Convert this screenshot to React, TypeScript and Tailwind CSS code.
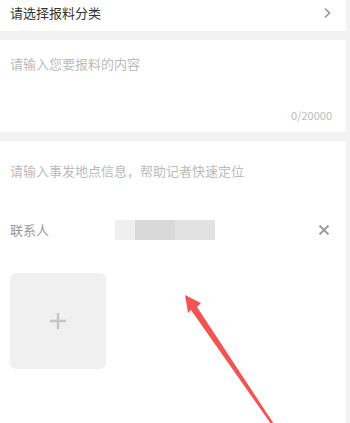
import React from "react";

const font = { fontFamily: '"Noto Sans CJK SC", "Noto Sans", sans-serif' };

export default function App() {
  return (
    <div
      className="relative h-[423px] w-[350px] overflow-hidden bg-[#f2f2f2]"
      style={font}
    >
      <div className="w-[346px]">
        {/* category row */}
        <div className="flex h-[31px] items-start justify-between bg-white pl-[10px] pr-[15px] pt-[4px]">
          <span className="text-[13px] leading-[18px] text-[#333]">请选择报料分类</span>
          <svg width="8" height="12" viewBox="0 0 8 12" className="mt-[3px]">
            <path d="M2 1.5 L6.5 6 L2 10.5" fill="none" stroke="#999" strokeWidth="1.6" />
          </svg>
        </div>

        {/* content textarea */}
        <div className="mt-[9px] flex h-[92px] flex-col justify-between bg-white px-[10px] pb-[10px] pt-[15px]">
          <span className="text-[13px] leading-[18px] text-[#bbb]">请输入您要报料的内容</span>
          <span className="self-end pr-[4px] text-[11px] leading-[14px] text-[#bbb]">0/20000</span>
        </div>

        {/* location / contact / upload */}
        <div className="mt-[9px] h-[300px] bg-white px-[10px] pt-[21px]">
          <div className="text-[13px] leading-[18px] text-[#bbb]">请输入事发地点信息，帮助记者快速定位</div>
          <div className="mt-[40px] flex h-[20px] items-center">
            <span className="w-[105px] text-[13px] leading-[18px] text-[#999]">联系人</span>
            <div className="flex h-[20px]">
              <div className="w-[20px] bg-[#efefef]" />
              <div className="w-[40px] bg-[#d9d9d9]" />
              <div className="w-[40px] bg-[#e2e2e2]" />
            </div>
            <svg width="12" height="12" viewBox="0 0 12 12" className="ml-auto mr-[6px]">
              <path d="M1.5 1.5 L10.5 10.5 M10.5 1.5 L1.5 10.5" stroke="#9a9a9a" strokeWidth="1.8" />
            </svg>
          </div>
          <div className="mt-[33px] flex h-[96px] w-[96px] items-center justify-center rounded-md bg-[#f0f0f0]">
            <svg width="18" height="18" viewBox="0 0 18 18">
              <path d="M9 1 V17 M1 9 H17" stroke="#c4c4c4" strokeWidth="2.4" />
            </svg>
          </div>
        </div>
      </div>

      {/* annotation arrow */}
      <svg
        className="pointer-events-none absolute left-0 top-0"
        width="350"
        height="423"
        viewBox="0 0 350 423"
      >
        <polygon
          points="185,295 201,303 197,307 274,424 271,424 191,310 188,313"
          fill="#f25454"
        />
      </svg>
    </div>
  );
}
